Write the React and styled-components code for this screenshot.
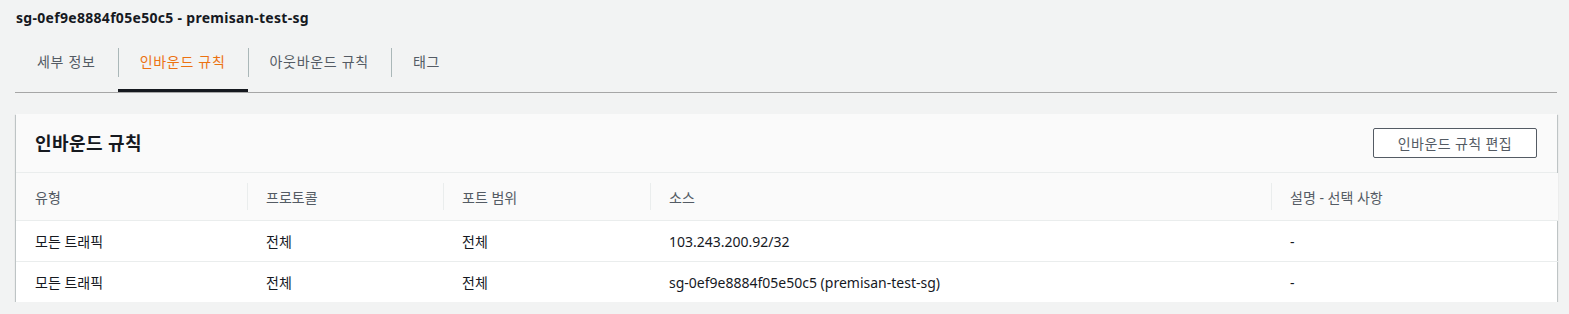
import React from 'react';
import styled, { createGlobalStyle } from 'styled-components';

const GlobalStyle = createGlobalStyle`
  body {
    margin: 0;
    background: #f2f3f3;
    font-family: "Noto Sans", "Noto Sans CJK KR", sans-serif;
    font-size: 14px;
    color: #16191f;
  }
`;

const Page = styled.div`
  padding: 7px 12px 0 15px;
`;

const Title = styled.div`
  padding-left: 1px;
  font-size: 14px;
  font-weight: 700;
  line-height: 22px;
  letter-spacing: 0.3px;
  color: #16191f;
`;

const TabList = styled.div`
  display: flex;
  margin-top: 11px;
  border-bottom: 1px solid #a6a6a6;
`;

const Tab = styled.div`
  position: relative;
  padding: 11px 22px 16px;
  line-height: 22px;
  letter-spacing: 0.7px;
  color: ${(p) => (p.$active ? '#ec7211' : '#545b64')};
  border-bottom: 3px solid ${(p) => (p.$active ? '#16191f' : 'transparent')};

  &:not(:first-child)::before {
    content: '';
    position: absolute;
    left: 0;
    top: 8px;
    height: 29px;
    border-left: 1px solid #aab7b8;
  }
`;

const Panel = styled.div`
  margin: 21px 0 0 1px;
  background: #ffffff;
  box-shadow: 0 1px 1px 0 rgba(0, 28, 36, 0.45), 1px 1px 1px 0 rgba(0, 28, 36, 0.15),
    -1px 1px 1px 0 rgba(0, 28, 36, 0.15);
`;

const PanelHeader = styled.div`
  display: flex;
  align-items: center;
  justify-content: space-between;
  height: 58px;
  padding: 0 20px 0 19px;
  background: #fafafa;
  border-bottom: 1px solid #eaeded;
`;

const PanelTitle = styled.h2`
  margin: 0;
  font-size: 18px;
  font-weight: 700;
  line-height: 22px;
  letter-spacing: 0.4px;
  color: #16191f;
`;

const Button = styled.button`
  width: 164px;
  height: 30px;
  background: #ffffff;
  border: 1px solid #545b64;
  border-radius: 2px;
  font-family: inherit;
  font-size: 14px;
  letter-spacing: 0.4px;
  color: #545b64;
  cursor: pointer;
`;

const Table = styled.table`
  width: 100%;
  border-collapse: collapse;
  table-layout: fixed;
`;

const HeadCell = styled.th`
  position: relative;
  height: 47px;
  padding: 0 19px;
  background: #fafafa;
  border-bottom: 1px solid #eaeded;
  text-align: left;
  font-weight: 400;
  color: #545b64;

  &:not(:first-child)::before {
    content: '';
    position: absolute;
    left: 0;
    top: 10px;
    height: 27px;
    border-left: 1px solid #eaeded;
  }
`;

const Cell = styled.td`
  height: 40px;
  padding: 0 19px;
  border-bottom: 1px solid #eaeded;
  color: #16191f;

  tr:last-child > & {
    border-bottom: none;
  }
`;

const columns = [
  { label: '유형', width: 231 },
  { label: '프로토콜', width: 196 },
  { label: '포트 범위', width: 207 },
  { label: '소스', width: 621 },
  { label: '설명 - 선택 사항', width: 287 },
];

const rules = [
  ['모든 트래픽', '전체', '전체', '103.243.200.92/32', '-'],
  ['모든 트래픽', '전체', '전체', 'sg-0ef9e8884f05e50c5 (premisan-test-sg)', '-'],
];

const tabs = ['세부 정보', '인바운드 규칙', '아웃바운드 규칙', '태그'];

export default function App() {
  return (
    <>
      <GlobalStyle />
      <Page>
        <Title>sg-0ef9e8884f05e50c5 - premisan-test-sg</Title>
        <TabList>
          {tabs.map((t, i) => (
            <Tab key={t} $active={i === 1}>
              {t}
            </Tab>
          ))}
        </TabList>
        <Panel>
          <PanelHeader>
            <PanelTitle>인바운드 규칙</PanelTitle>
            <Button>인바운드 규칙 편집</Button>
          </PanelHeader>
          <Table>
            <colgroup>
              {columns.map((c) => (
                <col key={c.label} style={{ width: c.width }} />
              ))}
            </colgroup>
            <thead>
              <tr>
                {columns.map((c) => (
                  <HeadCell key={c.label}>{c.label}</HeadCell>
                ))}
              </tr>
            </thead>
            <tbody>
              {rules.map((r, ri) => (
                <tr key={ri}>
                  {r.map((v, ci) => (
                    <Cell key={ci}>{v}</Cell>
                  ))}
                </tr>
              ))}
            </tbody>
          </Table>
        </Panel>
      </Page>
    </>
  );
}
